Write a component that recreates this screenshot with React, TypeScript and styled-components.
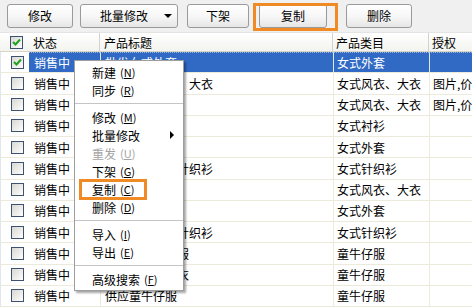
import React from 'react';
import styled, { createGlobalStyle, css } from 'styled-components';

const GlobalStyle = createGlobalStyle`
    body {
        margin: 0;
        background: #fff;
        font-family: "Noto Sans CJK SC", "Liberation Sans", sans-serif;
        font-size: 12px;
        color: #000;
        overflow: hidden;
    }
`

const Screen = styled.div`
    position: relative;
    width: 472px;
    height: 308px;
    overflow: hidden;
    background: #fff;
`

const marked = css`
    &::after {
        content: '';
        position: absolute;
        border: 3px solid #f08a24;
        pointer-events: none;
    }
`

const Toolbar = styled.div`
    display: flex;
    align-items: center;
    height: 32px;
    background: #f0f0f0;
`

const ToolButton = styled.div<{ $w: number; $ml: number; $marked?: boolean }>`
    position: relative;
    box-sizing: border-box;
    width: ${p => p.$w}px;
    height: 24px;
    margin-left: ${p => p.$ml}px;
    display: flex;
    align-items: center;
    justify-content: center;
    border: 1px solid #9a9a9a;
    border-radius: 3px;
    background: linear-gradient(#ffffff 0%, #f7f7f7 50%, #e6e6e6 100%);
    line-height: 1;
    ${p => p.$marked && marked}
    &::after {
        left: -7px;
        top: -2px;
        width: 85px;
        height: 28px;
        box-sizing: border-box;
    }
`

const SplitButton = styled(ToolButton)`
    justify-content: space-between;
    padding: 0 5px 0 19px;
`

const Caret = styled.span`
    width: 0;
    height: 0;
    border-left: 4px solid transparent;
    border-right: 4px solid transparent;
    border-top: 4px solid #000;
`

const Header = styled.div`
    display: grid;
    grid-template-columns: 28px 71px 233px 96px 1fr;
    height: 20px;
    box-sizing: border-box;
    background: linear-gradient(#ffffff, #f3f3ef);
    border-top: 1px solid #e4e4e4;
    border-bottom: 1px solid #d8d5c8;
`

const HeadCell = styled.div<{ $line?: boolean; $pad: number }>`
    display: flex;
    align-items: center;
    padding-left: ${p => p.$pad}px;
    white-space: nowrap;
    overflow: hidden;
    border-left: ${p => (p.$line ? '1px solid #d3d3cc' : 'none')};
`

const Row = styled.div`
    display: grid;
    grid-template-columns: 28px 71px 233px 96px 1fr;
    height: 21.25px;
    box-sizing: border-box;
    border-bottom: 1px solid #ebeadb;
    border-left: 1px solid #dfe6ee;
`

const Cell = styled.div<{ $line?: boolean; $pad: number; $sel?: boolean }>`
    display: flex;
    align-items: center;
    padding-left: ${p => p.$pad}px;
    white-space: nowrap;
    overflow: hidden;
    border-left: ${p => (p.$line ? `1px solid ${p.$sel ? '#dfe7f5' : '#ebeadb'}` : 'none')};
    ${p => p.$sel && css`
        background: #316ac5;
        color: #fff;
        border-top: 1px dotted #9fb4d8;
    `}
`

const BoxCell = styled.div`
    display: flex;
    align-items: center;
    padding-left: 10px;
`

const CheckBox = styled.span`
    box-sizing: border-box;
    width: 13px;
    height: 13px;
    display: flex;
    align-items: center;
    justify-content: center;
    border: 1px solid #3d5270;
    background: linear-gradient(135deg, #d8d8d3 0%, #f2f2ef 70%, #ffffff 100%);
`

const Menu = styled.div`
    position: absolute;
    left: 74px;
    top: 60px;
    width: 110px;
    box-sizing: border-box;
    padding: 2px 0;
    background: #fff;
    border: 1px solid #9e9e9e;
    box-shadow: 2px 2px 2px rgba(0, 0, 0, 0.35);
`

const MenuItem = styled.div<{ $disabled?: boolean; $marked?: boolean }>`
    position: relative;
    height: 18px;
    display: flex;
    align-items: center;
    padding-left: 17px;
    color: ${p => (p.$disabled ? '#a3a3a3' : '#000')};
    white-space: nowrap;
    ${p => p.$marked && marked}
    &::after {
        left: 4px;
        top: -1px;
        width: 68px;
        height: 21px;
        box-sizing: border-box;
    }
`

const Key = styled.span`
    margin-left: 4px;
    font-size: 11px;
    u { text-underline-offset: 1px; }
`

const SubArrow = styled.span`
    position: absolute;
    right: 9px;
    top: 5px;
    width: 0;
    height: 0;
    border-top: 4px solid transparent;
    border-bottom: 4px solid transparent;
    border-left: 4px solid #000;
`

const Separator = styled.div`
    height: 9px;
    display: flex;
    align-items: center;
    &::before {
        content: '';
        flex: 1;
        height: 1px;
        background: #c5c5c5;
    }
`

const Check = () => (
    <svg width="9" height="9" viewBox="0 0 9 9">
        <polyline points="1,4 3.5,6.5 8,1.5" fill="none" stroke="#21a121" strokeWidth="2" />
    </svg>
)

const rows = [
    { title: '批发女式外套', cat: '女式外套', auth: '', sel: true },
    { title: '新款女式风衣、大衣', cat: '女式风衣、大衣', auth: '图片,价格' },
    { title: '女式风衣', cat: '女式风衣、大衣', auth: '图片,价格' },
    { title: '女式衬衫', cat: '女式衬衫', auth: '' },
    { title: '女式外套', cat: '女式外套', auth: '' },
    { title: '秋季新款女式针织衫', cat: '女式针织衫', auth: '' },
    { title: '女式大衣', cat: '女式风衣、大衣', auth: '' },
    { title: '女式外套', cat: '女式外套', auth: '' },
    { title: '秋季新款女式针织衫', cat: '女式针织衫', auth: '' },
    { title: '供应儿童牛仔服', cat: '童牛仔服', auth: '' },
    { title: '新款童装牛仔衣', cat: '童牛仔服', auth: '' },
    { title: '供应童牛仔服', cat: '童牛仔服', auth: '' },
]

type Item = { label: string; key: string; disabled?: boolean; sub?: boolean; marked?: boolean } | null

const menu: Item[] = [
    { label: '新建', key: 'N' },
    { label: '同步', key: 'R' },
    null,
    { label: '修改', key: 'M' },
    { label: '批量修改', key: '', sub: true },
    { label: '重发', key: 'U', disabled: true },
    { label: '下架', key: 'G' },
    { label: '复制', key: 'C', marked: true },
    { label: '删除', key: 'D' },
    null,
    { label: '导入', key: 'I' },
    { label: '导出', key: 'E' },
    null,
    { label: '高级搜索', key: 'F' },
]

const App = () => {
    return <>
        <GlobalStyle />
        <Screen>
            <Toolbar>
                <ToolButton $w={66} $ml={7}>修改</ToolButton>
                <SplitButton $w={98} $ml={7}>
                    <span>批量修改</span>
                    <Caret />
                </SplitButton>
                <ToolButton $w={62} $ml={9}>下架</ToolButton>
                <ToolButton $w={68} $ml={10} $marked>复制</ToolButton>
                <ToolButton $w={66} $ml={19}>删除</ToolButton>
            </Toolbar>

            <Header>
                <BoxCell><CheckBox><Check /></CheckBox></BoxCell>
                <HeadCell $pad={5}>状态</HeadCell>
                <HeadCell $pad={4} $line>产品标题</HeadCell>
                <HeadCell $pad={3} $line>产品类目</HeadCell>
                <HeadCell $pad={3} $line>授权</HeadCell>
            </Header>

            {rows.map((r, i) =>
                <Row key={i}>
                    <BoxCell>
                        <CheckBox>{r.sel && <Check />}</CheckBox>
                    </BoxCell>
                    <Cell $pad={5} $sel={r.sel}>销售中</Cell>
                    <Cell $pad={4} $line $sel={r.sel}>{r.title}</Cell>
                    <Cell $pad={3} $line $sel={r.sel}>{r.cat}</Cell>
                    <Cell $pad={3} $line $sel={r.sel}>{r.auth}</Cell>
                </Row>
            )}

            <Menu>
                {menu.map((m, i) => m === null
                    ? <Separator key={i} />
                    : <MenuItem key={i} $disabled={m.disabled} $marked={m.marked}>
                        {m.label}
                        {m.key && <Key>(<u>{m.key}</u>)</Key>}
                        {m.sub && <SubArrow />}
                    </MenuItem>
                )}
            </Menu>
        </Screen>
    </>
};

export default App;
